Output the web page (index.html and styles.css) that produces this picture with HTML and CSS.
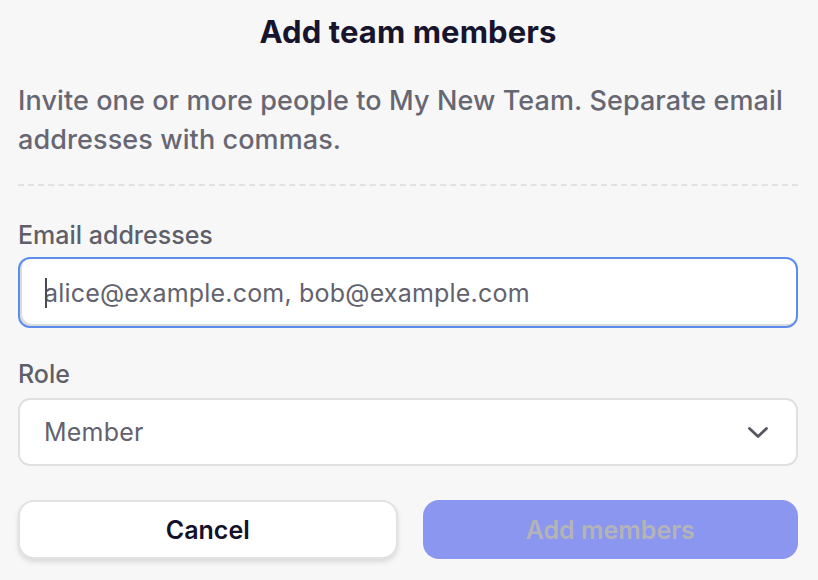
FILE: index.html
```html
<!DOCTYPE html>
<html>
<head>
<meta charset="utf-8">
<link rel="stylesheet" href="styles.css">
</head>
<body>
<div class="modal">
  <h1 class="title">Add team members</h1>
  <p class="desc">Invite one or more people to My New Team. Separate email addresses with commas.</p>
  <div class="divider"></div>
  <label class="label">Email addresses</label>
  <div class="input focused"><span class="caret"></span><span class="value">alice@example.com, bob@example.com</span></div>
  <label class="label role-label">Role</label>
  <div class="input select"><span class="value">Member</span>
    <svg class="chev" width="26" height="26" viewBox="0 0 26 26"><path d="M4.5 9.5l8.5 8 8.5-8" fill="none" stroke="#55555f" stroke-width="2.8" stroke-linecap="round" stroke-linejoin="round"/></svg>
  </div>
  <div class="actions">
    <button class="btn cancel">Cancel</button>
    <button class="btn primary">Add members</button>
  </div>
</div>
</body>
</html>
```
FILE: styles.css
```css
html, body {
  margin: 0;
  background: #f7f7f7;
}
body {
  font-family: Inter, "Noto Sans", sans-serif;
  width: 818px;
  height: 580px;
  overflow: hidden;
}
.modal {
  padding: 14px 20px 0 18px;
  display: flex;
  flex-direction: column;
}
.title {
  margin: 0;
  text-align: center;
  font-size: 31px;
  font-weight: 700;
  line-height: 36px;
  color: #17152e;
  letter-spacing: 0.1px;
}
.desc {
  margin: 31px 0 0;
  font-size: 27px;
  line-height: 39px;
  color: #676773;
  font-weight: 500;
  letter-spacing: 0.1px;
}
.divider {
  margin-top: 25px;
  border-top: 2px dashed #e2e2e4;
}
.label {
  margin-top: 34px;
  font-size: 25px;
  line-height: 30px;
  font-weight: 500;
  color: #5f5f6a;
}
.role-label {
  margin-top: 31px;
}
.input {
  margin-top: 8px;
  height: 68px;
  box-sizing: border-box;
  background: #fff;
  border: 2px solid #e0e0e0;
  border-radius: 12px;
  display: flex;
  align-items: center;
  padding: 0 24px;
  font-size: 25px;
  color: #62626e;
  letter-spacing: 0.2px;
  position: relative;
}
.input.focused {
  height: 71px;
  border-color: #5b8cee;
  box-shadow: inset 2px -2px 0 #dcdcdc;
  margin-top: 7px;
}
.caret {
  width: 2px;
  height: 30px;
  background: #4a4a55;
  position: absolute;
  left: 25px;
}
.select {
  margin-top: 9px;
  justify-content: space-between;
  padding-right: 25px;
}
.chev {
  display: block;
}
.actions {
  margin-top: 34px;
  display: flex;
  gap: 25px;
}
.btn {
  flex: 1;
  height: 59px;
  border-radius: 16px;
  font-family: Inter, "Noto Sans", sans-serif;
  font-size: 25px;
  font-weight: 600;
  cursor: pointer;
}
.cancel {
  background: #fff;
  border: 2px solid #e2e2e2;
  color: #14112b;
  box-shadow: 0 3px 5px rgba(0,0,0,0.12);
}
.primary {
  background: #8a96f0;
  border: none;
  color: #b3b3b8;
}
```
